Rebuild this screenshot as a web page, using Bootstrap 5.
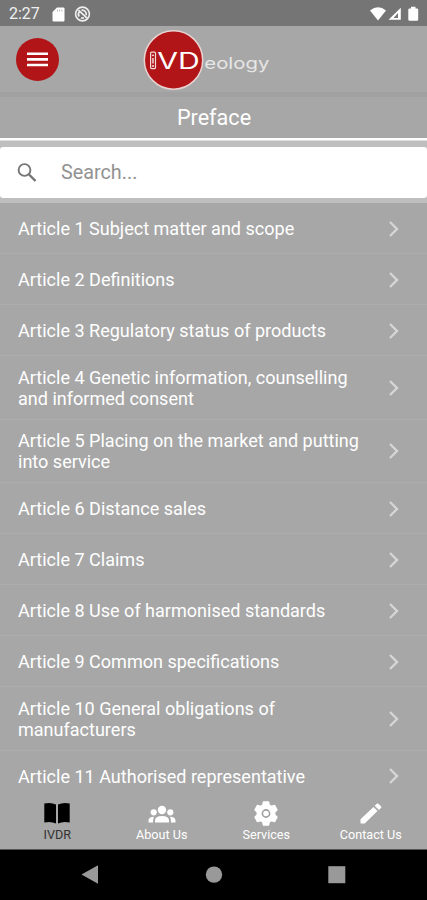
<!DOCTYPE html>
<html lang="en">
<head>
<meta charset="utf-8">
<meta name="viewport" content="width=device-width, initial-scale=1">
<title>IVDeology - Preface</title>
<link href="https://cdn.jsdelivr.net/npm/bootstrap@5.3.0/dist/css/bootstrap.min.css" rel="stylesheet">
<style>
body{font-family:Roboto,"Liberation Sans",sans-serif;background:#a7a7a7;color:#fff;height:900px;overflow:hidden}
svg{display:block;flex:none}
.status{height:26px;background:#757575;padding:2px 8px 0 9px}
.clock{font-size:16px;line-height:24px;color:#f0f0f0;width:43px}
.topbar{height:66px;padding-left:16px}
.menu-btn{width:43px;height:43px;background:#b11517;border-radius:50%;border:0;padding:0}
.brand{margin-left:82px}
.seam{height:5px;background:#a1a1a1}
.page-title{height:41px;font-size:21.6px;line-height:41px;margin:0;font-weight:400;padding-left:1px}
.title-rule{height:3px;background:#fff;border-bottom:.5px solid #ddd}
.search-wrap{background:#bebebe;padding:6px 0 5px;height:62px}
.search-box{height:51px;background:#fff;border-radius:3px;padding-left:17px}
.search-box input{font-size:19.8px;color:#757575;border:0;padding:0;margin-left:24px;outline:0;background:none;width:300px}
.search-box input::placeholder{color:#929292;opacity:1}
.articles{height:595px}
.article{height:51px;padding:1.2px 27px 0 18px;border-bottom:1px solid #adadad;color:#fff;font-size:18.05px;line-height:21.3px;text-decoration:none}
.article.tall{height:63.6px}
.tabs{height:50.5px;background:#a7a7a7;padding-left:5px}
.tabs a{color:#fff;text-decoration:none;font-size:12.6px;line-height:15px;width:104.5px;padding-top:3px}
.tabs a.current{color:#333}
.sysnav{height:51.5px;background:#000;border-top:1px solid #555;padding:0 81px}
</style>
<script src="https://cdn.jsdelivr.net/npm/bootstrap@5.3.0/dist/js/bootstrap.bundle.min.js"></script>
</head>
<body class="d-flex flex-column">
<svg width="0" height="0" class="d-none"><symbol id="chev" viewBox="0 0 12 18"><path d="M2 2l7 7-7 7" fill="none" stroke="#d6d6d6" stroke-width="2.400"/></symbol></svg>

<div class="status d-flex align-items-center flex-shrink-0">
  <span class="clock">2:27</span>
  <svg width="13" height="15" viewBox="0 0 13 15"><path d="M5 .5h6.500q1 0 1 1v12q0 1-1 1h-10q-1 0-1-1V5z" fill="#fff"/><path d="M5.500 2.500v2M7.700 2.500v2M9.900 2.500v2" stroke="#bbb" stroke-width="1"/></svg>
  <svg class="ms-2" width="18" height="17" viewBox="0 0 18 17"><circle cx="9.500" cy="8" r="6.900" fill="none" stroke="#eee" stroke-width="1.600"/><path d="M6.200 10.500a4 4 0 0 1 .3-5M8.500 4.300a4 4 0 0 1 4.700 5M11 11.800a4 4 0 0 1-3 0" fill="none" stroke="#eee" stroke-width="1.700"/><path d="M5.500 4.200l8.500 8" stroke="#eee" stroke-width="1.700"/></svg>
  <svg class="ms-auto" width="49" height="16" viewBox="0 0 49 16"><path d="M0 4.500Q8 -2 16 4.500L8 14.500z" fill="#fff"/><path d="M18.500 13.700L30.800 1.700v12z" fill="#fff"/><path d="M23.500 12L28 7V12z" fill="#757575"/><path d="M39.500 2.500H41V.7h4.500v1.800H47q1.200 0 1.200 1.200v9.800q0 1.200-1.200 1.200h-7.500q-1.200 0-1.200-1.200V3.700q0-1.200 1.200-1.200z" fill="#fff"/></svg>
</div>

<header class="topbar d-flex align-items-center flex-shrink-0">
  <button class="menu-btn d-flex align-items-center justify-content-center" aria-label="Menu">
    <svg width="21" height="16" viewBox="0 0 21 16"><path d="M0 2.800h21M0 8.400h21M0 14h21" stroke="#fff" stroke-width="2.600"/></svg>
  </button>
  <div class="brand">
    <svg width="132" height="64" viewBox="0 0 132 64">
      <circle cx="32.500" cy="33" r="29.200" fill="#b11517" stroke="#e8d2d0" stroke-width="1.500"/>
      <rect x="9.600" y="25.200" width="4.900" height="16.400" rx="1" fill="#b11517" stroke="#f3dcdc" stroke-width="1.200"/>
      <path d="M12 31v5.500" stroke="#e5b8b8" stroke-width="1.800"/><circle cx="12" cy="28.300" r=".9" fill="#fff"/><circle cx="12" cy="39" r=".9" fill="#fff"/>
      <text x="16.300" y="41.600" font-family="Inter,sans-serif" font-size="22.500" textLength="42.500" lengthAdjust="spacingAndGlyphs" fill="#fff">VD</text>
      <text x="63.300" y="41.800" font-family="Inter,sans-serif" font-size="16.500" font-weight="400" textLength="65" lengthAdjust="spacingAndGlyphs" fill="#e6e6e6">eology</text>
    </svg>
  </div>
</header>
<div class="seam flex-shrink-0"></div>
<h1 class="page-title text-center flex-shrink-0">Preface</h1>
<div class="title-rule flex-shrink-0"></div>
<div class="search-wrap flex-shrink-0">
  <label class="search-box d-flex align-items-center">
    <svg width="20" height="20" viewBox="0 0 20 20"><circle cx="7.500" cy="7" r="5.900" fill="none" stroke="#757575" stroke-width="1.900"/><path d="M12 11.500l6.500 6.500" stroke="#757575" stroke-width="2.400"/></svg>
    <input type="text" placeholder="Search...">
  </label>
</div>

<main class="articles overflow-hidden flex-shrink-0">
  <a class="article d-flex align-items-center justify-content-between"><span>Article 1 Subject matter and scope</span><svg width="12" height="18"><use href="#chev"/></svg></a>
  <a class="article d-flex align-items-center justify-content-between"><span>Article 2 Definitions</span><svg width="12" height="18"><use href="#chev"/></svg></a>
  <a class="article d-flex align-items-center justify-content-between"><span>Article 3 Regulatory status of products</span><svg width="12" height="18"><use href="#chev"/></svg></a>
  <a class="article tall d-flex align-items-center justify-content-between"><span>Article 4 Genetic information, counselling<br>and informed consent</span><svg width="12" height="18"><use href="#chev"/></svg></a>
  <a class="article tall d-flex align-items-center justify-content-between"><span>Article 5 Placing on the market and putting<br>into service</span><svg width="12" height="18"><use href="#chev"/></svg></a>
  <a class="article d-flex align-items-center justify-content-between"><span>Article 6 Distance sales</span><svg width="12" height="18"><use href="#chev"/></svg></a>
  <a class="article d-flex align-items-center justify-content-between"><span>Article 7 Claims</span><svg width="12" height="18"><use href="#chev"/></svg></a>
  <a class="article d-flex align-items-center justify-content-between"><span>Article 8 Use of harmonised standards</span><svg width="12" height="18"><use href="#chev"/></svg></a>
  <a class="article d-flex align-items-center justify-content-between"><span>Article 9 Common specifications</span><svg width="12" height="18"><use href="#chev"/></svg></a>
  <a class="article tall d-flex align-items-center justify-content-between"><span>Article 10 General obligations of<br>manufacturers</span><svg width="12" height="18"><use href="#chev"/></svg></a>
  <a class="article d-flex align-items-center justify-content-between"><span>Article 11 Authorised representative</span><svg width="12" height="18"><use href="#chev"/></svg></a>
</main>

<nav class="tabs d-flex flex-shrink-0">
  <a class="current d-flex flex-column align-items-center"><svg width="28" height="26" viewBox="0 0 28 26"><path d="M1.300 2.500Q8 1 13 3.500V22.500Q8 20 1.300 21.500zM15 3.500Q20 1 26.700 2.500v19Q20 20 15 22.500z" fill="#000"/></svg>IVDR</a>
  <a class="d-flex flex-column align-items-center"><svg width="28" height="26" viewBox="0 0 28 26" fill="#fff"><circle cx="14" cy="9" r="4.200"/><circle cx="5.700" cy="11.300" r="3.100"/><circle cx="22.300" cy="11.300" r="3.100"/><path d="M7 21.500v-2q0-4.500 7-4.500t7 4.500v2zM.5 21.500v-2q0-3.500 5.500-3.700Q5 17.500 5 21.500zM27.500 21.500v-2q0-3.500-5.500-3.700Q23 17.500 23 21.500z"/></svg>About Us</a>
  <a class="d-flex flex-column align-items-center"><svg width="28" height="26" viewBox="0 0 28 26"><path d="M11.500 1h5l.8 3.200 2 1.100 3.200-.9 2.500 4.400-2.300 2.400v2.600l2.300 2.400-2.500 4.400-3.200-.9-2 1.100-.8 3.200h-5l-.8-3.200-2-1.100-3.200.9L3 16.200l2.300-2.400v-2.600L3 8.800l2.500-4.400 3.200.9 2-1.100z" fill="#fff" stroke="#fff" stroke-width="1.400" stroke-linejoin="round"/><circle cx="14" cy="12.500" r="3.600" fill="#fff" stroke="#a0a0a0" stroke-width="1.600"/></svg>Services</a>
  <a class="d-flex flex-column align-items-center"><svg width="28" height="26" viewBox="0 0 28 26" fill="#fff"><path d="M3.500 22.500v-4.200L16.500 6l4 4L7.700 22.500zM17.700 4.700l2-1.900q.8-.8 1.700 0l2.600 2.500q.8.900 0 1.700l-2.100 2z"/></svg>Contact Us</a>
</nav>
<div class="sysnav d-flex align-items-center justify-content-between flex-shrink-0">
  <svg width="18" height="20" viewBox="0 0 18 20"><path d="M.5 9.500L17 .3v18.400z" fill="#999"/></svg>
  <svg width="18" height="18" viewBox="0 0 18 18"><circle cx="9" cy="8.600" r="8.200" fill="#999"/></svg>
  <svg width="18" height="18" viewBox="0 0 18 18"><rect x=".3" y=".2" width="17" height="17" fill="#999"/></svg>
</div>
</body>
</html>
